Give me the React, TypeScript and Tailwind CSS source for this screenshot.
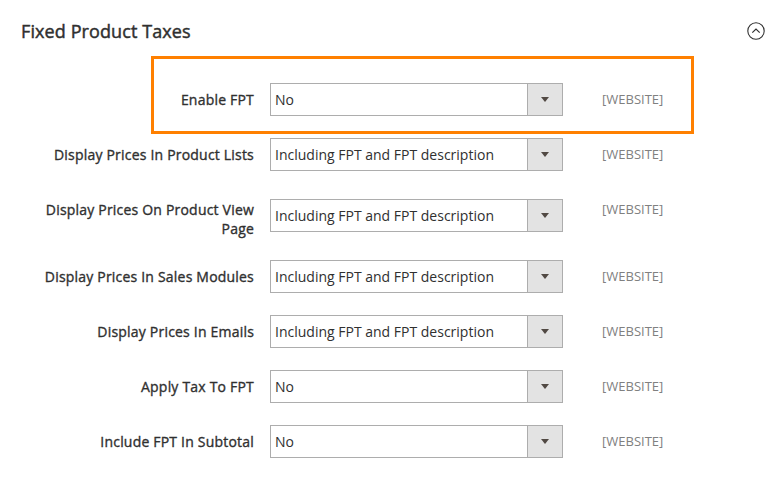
import React from 'react';

interface FieldRow {
  label: string;
  value: string;
  scope: string;
  highlighted?: boolean;
}

const rows: FieldRow[] = [
  { label: 'Enable FPT', value: 'No', scope: '[WEBSITE]', highlighted: true },
  { label: 'Display Prices In Product Lists', value: 'Including FPT and FPT description', scope: '[WEBSITE]' },
  { label: 'Display Prices On Product View Page', value: 'Including FPT and FPT description', scope: '[WEBSITE]' },
  { label: 'Display Prices In Sales Modules', value: 'Including FPT and FPT description', scope: '[WEBSITE]' },
  { label: 'Display Prices In Emails', value: 'Including FPT and FPT description', scope: '[WEBSITE]' },
  { label: 'Apply Tax To FPT', value: 'No', scope: '[WEBSITE]' },
  { label: 'Include FPT In Subtotal', value: 'No', scope: '[WEBSITE]' },
];

const SelectBox: React.FC<{ value: string }> = ({ value }) => (
  <div className="flex h-[33px] w-[293px] border border-[#adadad] bg-white">
    <div className="flex-1 pl-[4px] text-[14px] leading-[31px] text-[#303030] whitespace-nowrap overflow-hidden">
      {value}
    </div>
    <div className="flex w-[35px] items-center justify-center border-l border-[#adadad] bg-[#e3e3e3]">
      {/* down arrow */}
      <svg width="8" height="5" viewBox="0 0 8 5">
        <path d="M0 0 L8 0 L4 5 Z" fill="#514943" />
      </svg>
    </div>
  </div>
);

export default function App() {
  return (
    <div
      className="h-[478px] w-[783px] bg-white text-[#303030]"
      style={{ fontFamily: '"Open Sans", "Noto Sans", sans-serif' }}
    >
      {/* Section header */}
      <div className="flex h-[62px] items-center justify-between pl-[21px] pr-[18px]">
        <h2 className="text-[18px] font-normal tracking-[0.1px] text-[#303030] [-webkit-text-stroke:0.45px_#303030]">
          Fixed Product Taxes
        </h2>
        <svg width="18" height="18" viewBox="0 0 18 18" fill="none">
          <circle cx="9" cy="9" r="8.2" stroke="#303030" strokeWidth="1.1" />
          <path d="M5.3 10.6 L9 7 L12.7 10.6" stroke="#303030" strokeWidth="1.2" fill="none" />
        </svg>
      </div>

      {/* Fields */}
      <div className="mt-[21px] flex flex-col gap-[22px]">
        {rows.map((row) => (
          <div key={row.label} className="relative flex items-start">
            {row.highlighted && (
              <span className="pointer-events-none absolute left-[151px] top-[-27px] h-[78px] w-[543px] border-[3px] border-[#ff8000]" />
            )}
            <div className="w-[254px] pl-[40px] pt-[7px] text-right text-[14px] font-normal leading-[19px] tracking-[0.2px] text-[#303030] [-webkit-text-stroke:0.35px_#303030]">
              {row.label}
            </div>
            <div className="ml-[16px] self-center">
              <SelectBox value={row.value} />
            </div>
            <div className="ml-[39px] pt-[7px] text-[13px] leading-[19px] text-[#808080]">{row.scope}</div>
          </div>
        ))}
      </div>
    </div>
  );
}
